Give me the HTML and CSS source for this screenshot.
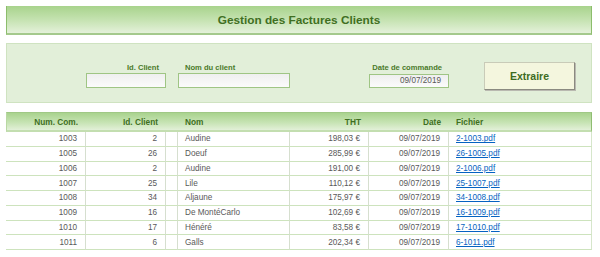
FILE: index.html
```html
<!DOCTYPE html>
<html lang="fr">
<head>
<meta charset="utf-8">
<title>Gestion des Factures Clients</title>
<link rel="stylesheet" href="styles.css">
</head>
<body>
<div class="page">
  <header class="title-bar">Gestion des Factures Clients</header>

  <section class="form-panel">
    <div class="lbl lbl-right c2">Id. Client</div>
    <div class="lbl lbl-left c4">Nom du client</div>
    <div class="lbl lbl-right c6">Date de commande</div>
    <div class="field c2 r2"></div>
    <div class="field c4 r2"></div>
    <div class="field field-date c6 r2">09/07/2019</div>
    <button class="btn c7" type="button">Extraire</button>
  </section>

  <section class="table">
    <div class="th right">Num. Com.</div>
    <div class="th right">Id. Client</div>
    <div class="th"></div>
    <div class="th left">Nom</div>
    <div class="th right">THT</div>
    <div class="th right">Date</div>
    <div class="th left last">Fichier</div>

    <div class="td right">1003</div><div class="td right">2</div><div class="td"></div><div class="td left">Audine</div><div class="td right">198,03 €</div><div class="td right">09/07/2019</div><div class="td left last"><a href="#">2-1003.pdf</a></div>
    <div class="td right">1005</div><div class="td right">26</div><div class="td"></div><div class="td left">Doeuf</div><div class="td right">285,99 €</div><div class="td right">09/07/2019</div><div class="td left last"><a href="#">26-1005.pdf</a></div>
    <div class="td right">1006</div><div class="td right">2</div><div class="td"></div><div class="td left">Audine</div><div class="td right">191,00 €</div><div class="td right">09/07/2019</div><div class="td left last"><a href="#">2-1006.pdf</a></div>
    <div class="td right">1007</div><div class="td right">25</div><div class="td"></div><div class="td left">Lile</div><div class="td right">110,12 €</div><div class="td right">09/07/2019</div><div class="td left last"><a href="#">25-1007.pdf</a></div>
    <div class="td right">1008</div><div class="td right">34</div><div class="td"></div><div class="td left">Aljaune</div><div class="td right">175,97 €</div><div class="td right">09/07/2019</div><div class="td left last"><a href="#">34-1008.pdf</a></div>
    <div class="td right">1009</div><div class="td right">16</div><div class="td"></div><div class="td left">De MontéCarlo</div><div class="td right">102,69 €</div><div class="td right">09/07/2019</div><div class="td left last"><a href="#">16-1009.pdf</a></div>
    <div class="td right">1010</div><div class="td right">17</div><div class="td"></div><div class="td left">Hénéré</div><div class="td right">83,58 €</div><div class="td right">09/07/2019</div><div class="td left last"><a href="#">17-1010.pdf</a></div>
    <div class="td right">1011</div><div class="td right">6</div><div class="td"></div><div class="td left">Galls</div><div class="td right">202,34 €</div><div class="td right">09/07/2019</div><div class="td left last"><a href="#">6-1011.pdf</a></div>
  </section>
</div>
</body>
</html>
```

FILE: styles.css
```css
* { box-sizing: border-box; }

html, body {
  margin: 0;
  padding: 0;
  background: #ffffff;
  font-family: "Liberation Sans", Arial, sans-serif;
}

.page {
  width: 586px;
  margin: 6px 0 0 6px;
}

.title-bar {
  height: 29px;
  display: flex;
  align-items: center;
  justify-content: center;
  background: linear-gradient(to bottom, #a8d38c 0%, #c4e2b0 50%, #e4f1da 100%);
  border-left: 1px solid #8cbd6c;
  border-right: 1px solid #8cbd6c;
  border-bottom: 2px solid #a4c98c;
  color: #3f6f22;
  font-weight: bold;
  font-size: 11.8px;
  padding-top: 1px;
}

.form-panel {
  margin-top: 8px;
  height: 60px;
  background: #e2efd9;
  border: 1px solid #cfe3c1;
  display: grid;
  grid-template-columns: 79px 80px 12px 112px 79px 80px 142px;
  grid-template-rows: 10px 15px;
  padding-top: 19px;
}

.lbl {
  grid-row: 1;
  font-size: 7.6px;
  font-weight: bold;
  color: #4a7a2a;
  line-height: 9px;
}
.lbl-right { text-align: right; padding-right: 7px; }
.lbl-left { padding-left: 7px; }

.c2 { grid-column: 2; }
.c4 { grid-column: 4; }
.c6 { grid-column: 6; }
.c7 { grid-column: 7; }
.r2 { grid-row: 2; }

.field {
  background: linear-gradient(to bottom, #efefef, #fbfbfb);
  border: 1px solid #9fc584;
  height: 15px;
}
.c6.field { margin-top: 1px; height: 14px; }

.field-date {
  font-size: 8.2px;
  color: #595959;
  text-align: right;
  padding-right: 7px;
  line-height: 12px;
}

.btn {
  grid-row: 1 / 3;
  margin: -1px 0 0 35px;
  width: 91px;
  height: 28px;
  background: #f4f6de;
  border: 1px solid #c9cbb8;
  border-right-color: #8a8a80;
  border-bottom-color: #8a8a80;
  box-shadow: 1px 1px 0 #b9b9b0;
  font-family: "Liberation Sans", Arial, sans-serif;
  font-weight: bold;
  font-size: 10.5px;
  color: #3d6b22;
  padding: 0;
}

.table {
  margin-top: 9px;
  display: grid;
  grid-template-columns: 80px 80px 12px 112px 79px 80px 143px;
  grid-template-rows: 20px repeat(8, 14.75px);
}

.th {
  background: linear-gradient(to bottom, #a9d38e 0%, #c6e3b3 55%, #e2f0d8 100%);
  border-bottom: 2px solid #c3deb0;
  border-top: 1px solid #a0c886;
  font-size: 8.3px;
  font-weight: bold;
  color: #3f6f22;
  display: flex;
  align-items: center;
}
.th.last { border-right: 1px solid #8fbd72; }
.th:first-child { border-left: 1px solid #b9d8a3; }

.td {
  font-size: 8.2px;
  color: #595959;
  display: flex;
  align-items: center;
  border-bottom: 1px solid #cde3bd;
  border-right: 1px solid #d6dfcf;
}
.td.last { border-right: 1px solid #d6e6cb; }

.right { justify-content: flex-end; padding-right: 8px; }
.left { padding-left: 7px; }

.td a {
  color: #0563c1;
  text-decoration: underline;
}
```
